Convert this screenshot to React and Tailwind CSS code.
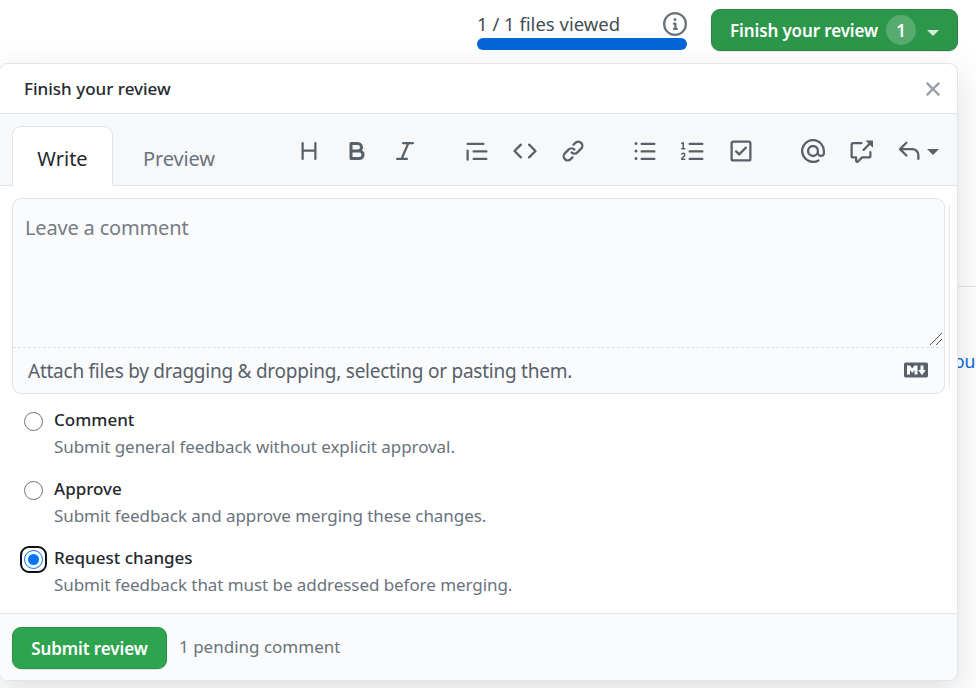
import React from "react";

const PATHS = {
  heading: "M3.75 2a.75.75 0 0 1 .75.75V7h7V2.75a.75.75 0 0 1 1.5 0v10.5a.75.75 0 0 1-1.5 0V8.5h-7v4.75a.75.75 0 0 1-1.5 0V2.75A.75.75 0 0 1 3.75 2Z",
  bold: "M4 2h4.5a3.501 3.501 0 0 1 2.852 5.53A3.499 3.499 0 0 1 9.5 14H4a1 1 0 0 1-1-1V3a1 1 0 0 1 1-1Zm1 7v3h4.5a1.5 1.5 0 0 0 0-3Zm3.5-2a1.5 1.5 0 0 0 0-3H5v3Z",
  italic: "M6 2.75A.75.75 0 0 1 6.75 2h6.5a.75.75 0 0 1 0 1.5h-2.505l-3.858 9H9.25a.75.75 0 0 1 0 1.5h-6.5a.75.75 0 0 1 0-1.5h2.505l3.858-9H6.75A.75.75 0 0 1 6 2.75Z",
  quote: "M1.75 2.5h10.5a.75.75 0 0 1 0 1.5H1.75a.75.75 0 0 1 0-1.5Zm4 5h8.5a.75.75 0 0 1 0 1.5h-8.5a.75.75 0 0 1 0-1.5Zm0 5h8.5a.75.75 0 0 1 0 1.5h-8.5a.75.75 0 0 1 0-1.5ZM2.5 7.75v6a.75.75 0 0 1-1.5 0v-6a.75.75 0 0 1 1.5 0Z",
  code: "m11.28 3.22 4.25 4.25a.75.75 0 0 1 0 1.06l-4.25 4.25a.749.749 0 0 1-1.275-.326.749.749 0 0 1 .215-.734L13.94 8l-3.72-3.72a.749.749 0 0 1 .326-1.275.749.749 0 0 1 .734.215Zm-6.56 0a.751.751 0 0 1 1.042.018.751.751 0 0 1 .018 1.042L2.06 8l3.72 3.72a.749.749 0 0 1-.326 1.275.749.749 0 0 1-.734-.215L.47 8.53a.75.75 0 0 1 0-1.06Z",
  link: "m7.775 3.275 1.25-1.25a3.5 3.5 0 1 1 4.95 4.95l-2.5 2.5a3.5 3.5 0 0 1-4.95 0 .751.751 0 0 1 .018-1.042.751.751 0 0 1 1.042-.018 1.998 1.998 0 0 0 2.83 0l2.5-2.5a2.002 2.002 0 0 0-2.83-2.83l-1.25 1.25a.751.751 0 0 1-1.042-.018.751.751 0 0 1-.018-1.042Zm-4.69 9.64a1.998 1.998 0 0 0 2.83 0l1.25-1.25a.751.751 0 0 1 1.042.018.751.751 0 0 1 .018 1.042l-1.25 1.25a3.5 3.5 0 1 1-4.95-4.95l2.5-2.5a3.5 3.5 0 0 1 4.95 0 .751.751 0 0 1-.018 1.042.751.751 0 0 1-1.042.018 1.998 1.998 0 0 0-2.83 0l-2.5 2.5a1.998 1.998 0 0 0 0 2.83Z",
  ul: "M5.75 2.5h8.5a.75.75 0 0 1 0 1.5h-8.5a.75.75 0 0 1 0-1.5Zm0 5h8.5a.75.75 0 0 1 0 1.5h-8.5a.75.75 0 0 1 0-1.5Zm0 5h8.5a.75.75 0 0 1 0 1.5h-8.5a.75.75 0 0 1 0-1.5ZM2 14a1 1 0 1 1 0-2 1 1 0 0 1 0 2Zm1-6a1 1 0 1 1-2 0 1 1 0 0 1 2 0ZM2 4a1 1 0 1 1 0-2 1 1 0 0 1 0 2Z",
  ol: "M5 3.25a.75.75 0 0 1 .75-.75h8.5a.75.75 0 0 1 0 1.5h-8.5A.75.75 0 0 1 5 3.25Zm0 5a.75.75 0 0 1 .75-.75h8.5a.75.75 0 0 1 0 1.5h-8.5A.75.75 0 0 1 5 8.25Zm0 5a.75.75 0 0 1 .75-.75h8.5a.75.75 0 0 1 0 1.5h-8.5a.75.75 0 0 1-.75-.75ZM.924 10.32a.5.5 0 0 1-.851-.525l.001-.001.001-.002.002-.004.007-.011c.097-.144.215-.273.348-.384.228-.19.588-.392 1.068-.392.468 0 .858.181 1.126.484.259.294.377.673.377 1.038 0 .987-.686 1.495-1.156 1.845l-.047.035c-.303.225-.522.4-.654.597h1.357a.5.5 0 0 1 0 1H.5a.5.5 0 0 1-.5-.5c0-1.005.692-1.52 1.167-1.875l.035-.025c.531-.396.8-.625.8-1.078a.57.57 0 0 0-.128-.376C1.806 10.068 1.695 10 1.5 10a.658.658 0 0 0-.429.163.835.835 0 0 0-.144.153ZM2.003 2.5V6h.503a.5.5 0 0 1 0 1H.5a.5.5 0 0 1 0-1h.503V3.308l-.28.14a.5.5 0 0 1-.446-.895l1.003-.5a.5.5 0 0 1 .723.447Z",
  task: "M2.75 1h10.5c.966 0 1.75.784 1.75 1.75v10.5A1.75 1.75 0 0 1 13.25 15H2.75A1.75 1.75 0 0 1 1 13.25V2.75C1 1.784 1.784 1 2.75 1ZM2.5 2.75v10.5c0 .138.112.25.25.25h10.5a.25.25 0 0 0 .25-.25V2.75a.25.25 0 0 0-.25-.25H2.75a.25.25 0 0 0-.25.25Zm9.28 3.53-4.5 4.5a.75.75 0 0 1-1.06 0l-2-2a.75.75 0 0 1 1.06-1.06L6.75 9.19l3.97-3.97a.75.75 0 0 1 1.06 1.06Z",
  mention: "M4.75 2.37a6.501 6.501 0 0 0 6.5 11.26.75.75 0 0 1 .75 1.298A7.999 7.999 0 0 1 .989 4.148 8 8 0 0 1 16 7.75v1.5a2.75 2.75 0 0 1-5.072 1.475 3.999 3.999 0 0 1-6.65-4.19A4 4 0 0 1 12 8v1.25a1.25 1.25 0 0 0 2.5 0V7.867a6.5 6.5 0 0 0-9.75-5.496ZM10.5 8a2.5 2.5 0 1 0-5 0 2.5 2.5 0 0 0 5 0Z",
  xref: "M2.75 3.5a.25.25 0 0 0-.25.25v7.5c0 .138.112.25.25.25h2a.75.75 0 0 1 .75.75v2.19l2.72-2.72a.749.749 0 0 1 .53-.22h4.5a.25.25 0 0 0 .25-.25v-2.5a.75.75 0 0 1 1.5 0v2.5A1.75 1.75 0 0 1 13.25 13H9.06l-2.573 2.573A1.458 1.458 0 0 1 4 14.543V13H2.75A1.75 1.75 0 0 1 1 11.25v-7.5C1 2.784 1.784 2 2.75 2h5.5a.75.75 0 0 1 0 1.5ZM16 1.25v4.146a.25.25 0 0 1-.427.177L14.03 4.03l-3.75 3.75a.749.749 0 0 1-1.275-.326.749.749 0 0 1 .215-.734l3.75-3.75-1.543-1.543A.25.25 0 0 1 11.604 1h4.146a.25.25 0 0 1 .25.25Z",
  reply: "M6.78 1.97a.75.75 0 0 1 0 1.06L3.81 6h6.44A4.75 4.75 0 0 1 15 10.75v2.5a.75.75 0 0 1-1.5 0v-2.5a3.25 3.25 0 0 0-3.25-3.25H3.81l2.97 2.97a.749.749 0 0 1-.326 1.275.749.749 0 0 1-.734-.215L1.47 7.28a.75.75 0 0 1 0-1.06l4.25-4.25a.75.75 0 0 1 1.06 0Z",
  info: "M0 8a8 8 0 1 1 16 0A8 8 0 0 1 0 8Zm8-6.5a6.5 6.5 0 1 0 0 13 6.5 6.5 0 0 0 0-13ZM6.5 7.75A.75.75 0 0 1 7.25 7h1a.75.75 0 0 1 .75.75v2.75h.25a.75.75 0 0 1 0 1.5h-2a.75.75 0 0 1 0-1.5h.25v-2h-.25a.75.75 0 0 1-.75-.75ZM8 6a1 1 0 1 1 0-2 1 1 0 0 1 0 2Z",
  markdown: "M14.85 3c.63 0 1.15.52 1.14 1.15v7.7c0 .63-.51 1.15-1.15 1.15H1.15C.52 13 0 12.48 0 11.84V4.15C0 3.52.52 3 1.15 3ZM9 11V5H7L5.5 7 4 5H2v6h2V8l1.5 1.92L7 8v3Zm2.99.5L14.5 8H13V5h-2v3H9.5Z",
  x: "M3.72 3.72a.75.75 0 0 1 1.06 0L8 6.94l3.22-3.22a.749.749 0 0 1 1.275.326.749.749 0 0 1-.215.734L9.06 8l3.22 3.22a.749.749 0 0 1-.326 1.275.749.749 0 0 1-.734-.215L8 9.06l-3.22 3.22a.751.751 0 0 1-1.042-.018.751.751 0 0 1-.018-1.042L6.94 8 3.72 4.78a.75.75 0 0 1 0-1.06Z",
};

function Icon({ name, className = "" }) {
  return (
    <svg viewBox="0 0 16 16" fill="currentColor" className={`size-6 shrink-0 ${className}`} aria-hidden="true">
      <path fillRule="evenodd" d={PATHS[name]} />
    </svg>
  );
}

function Caret({ className = "" }) {
  return (
    <svg viewBox="0 0 12 6" fill="currentColor" className={`h-1.5 w-3 shrink-0 ${className}`} aria-hidden="true">
      <path d="M0 0h12L6 6Z" />
    </svg>
  );
}

const TOOL_GROUPS = [
  ["heading", "bold", "italic"],
  ["quote", "code", "link"],
  ["ul", "ol", "task"],
];

const OPTIONS = [
  { title: "Comment", text: "Submit general feedback without explicit approval." },
  { title: "Approve", text: "Submit feedback and approve merging these changes." },
  { title: "Request changes", text: "Submit feedback that must be addressed before merging.", checked: true },
];

function Radio({ checked }) {
  if (checked) {
    return (
      <span className="-m-1 flex size-[27px] items-center justify-center rounded-[9px] border-2 border-[#101010]">
        <span className="flex size-[19px] items-center justify-center rounded-full border border-[#0075ff]">
          <span className="size-[11px] rounded-full bg-[#0075ff]" />
        </span>
      </span>
    );
  }
  return <span className="size-[19px] rounded-full border border-[#767676] bg-white" />;
}

export default function App() {
  return (
    <div className="relative h-[688px] w-[976px] overflow-hidden bg-white font-['Noto_Sans',sans-serif] text-[#24292e]">
      <div className="absolute top-[286px] left-[950px] h-px w-[26px] bg-[#e1e4e8]" />
      <span className="absolute top-[349px] left-[945px] text-[17.5px] leading-6 whitespace-nowrap text-[#0366d6]">you</span>

      <div className="flex h-[63px] justify-end pr-[18px]">
        <div className="mr-6 w-[210px] pt-3">
          <div className="flex h-6 items-center justify-between text-[#6a737d]">
            <span className="text-[18.5px] leading-6 whitespace-nowrap text-[#444d56]">1 / 1 files viewed</span>
            <Icon name="info" />
          </div>
          <div className="mt-0.5 h-3 rounded-full bg-[#0366d6]" />
        </div>
        <button className="mt-[9px] flex h-[42px] w-[247px] items-center rounded-[9px] border border-[#2a8444] bg-[#2c974b] pl-[18px] text-white shadow-[0_1px_1px_rgba(27,31,35,0.1)]">
          <span className="w-[148px] pt-0.5 text-left text-[17px] leading-6 font-semibold tracking-[-0.12px] whitespace-nowrap">Finish your review</span>
          <span className="ml-2 flex size-[30px] items-center justify-center rounded-full bg-white/20 text-[17px] leading-none font-semibold">1</span>
          <Caret className="mt-1.5 ml-[11px] opacity-80" />
        </button>
      </div>

      <div className="relative -ml-px flex h-[618px] w-[959px] flex-col overflow-hidden rounded-[9px] border border-[#e1e4e8] bg-white shadow-[0_12px_36px_rgba(100,105,110,0.22)]">
        <div className="flex h-[49px] shrink-0 items-center justify-between pr-3 pl-6">
          <span className="text-[17px] leading-6 font-medium whitespace-nowrap">Finish your review</span>
          <Icon name="x" className="text-[#959da5]" />
        </div>

        <div className="flex h-[73px] shrink-0 border-y border-[#e1e4e8] bg-[#f6f8fa] pt-3 pl-3">
          <div className="-mb-px flex w-[101px] items-center justify-center rounded-t-[9px] border border-b-0 border-[#e1e4e8] bg-white pt-1">
            <span className="text-[20px] leading-7 whitespace-nowrap">Write</span>
          </div>
          <div className="flex w-[184px] items-center pt-1.5 pl-[30px]">
            <span className="text-[20px] leading-7 tracking-[-0.15px] whitespace-nowrap text-[#6a737d]">Preview</span>
          </div>
          <div className="flex h-[50px] items-center gap-12 text-[#586069]">
            {TOOL_GROUPS.map((group) => (
              <div key={group[0]} className="flex gap-6">
                {group.map((name) => (
                  <Icon key={name} name={name} />
                ))}
              </div>
            ))}
            <div className="flex items-center gap-6">
              <Icon name="mention" />
              <Icon name="xref" />
              <div className="flex items-center gap-1.5">
                <Icon name="reply" />
                <Caret className="mt-0.5" />
              </div>
            </div>
          </div>
        </div>

        <div className="flex h-[208px] shrink-0 pt-3 pl-3">
          <div className="flex h-[196px] w-[933px] flex-col rounded-[9px] border border-[#e1e4e8] bg-[#fafbfc]">
            <div className="flex h-[149px] justify-between border-b border-dashed border-[#dfe2e5] pt-[15px] pl-3">
              <span className="text-[20px] leading-7 tracking-[-0.17px] whitespace-nowrap text-[#757c85]">Leave a comment</span>
              <svg viewBox="0 0 14 14" className="mr-px mb-px size-[14px] self-end" fill="none" stroke="#555" strokeWidth="1">
                <path d="M1 13 13 1M7 13l6-6" />
              </svg>
            </div>
            <div className="flex flex-1 items-center justify-between pr-4 pl-[15px] text-[#586069]">
              <span className="text-[19px] leading-7 tracking-[-0.25px] whitespace-nowrap">Attach files by dragging &amp; dropping, selecting or pasting them.</span>
              <Icon name="markdown" className="-mt-0.5" />
            </div>
          </div>
          <div className="mt-[7px] ml-1 h-[183px] w-px bg-[#e1e4e8]" />
        </div>

        <div className="flex h-[219px] shrink-0 flex-col pt-3.5">
          {OPTIONS.map((o) => (
            <div key={o.title} className="flex h-[69px] shrink-0 pl-6">
              <div className="flex w-[30px] pt-1">
                <Radio checked={o.checked} />
              </div>
              <div>
                <div className="text-[17px] leading-6 font-medium whitespace-nowrap">{o.title}</div>
                <div className="text-[17px] leading-[30px] tracking-[-0.06px] whitespace-nowrap text-[#6a737d]">{o.text}</div>
              </div>
            </div>
          ))}
        </div>

        <div className="flex flex-1 items-start border-t border-[#e1e4e8] bg-[#fafbfc] pt-[13px] pl-3">
          <button className="flex h-[42px] w-[155px] items-center justify-center rounded-[9px] border border-[#2a9147] bg-[#2ea44f] text-white shadow-[0_1px_1px_rgba(27,31,35,0.1)]">
            <span className="pt-0.5 text-[17px] leading-6 font-semibold tracking-[-0.08px] whitespace-nowrap">Submit review</span>
          </button>
          <span className="mt-2 ml-3 text-[17px] leading-6 whitespace-nowrap text-[#6a737d]">1 pending comment</span>
        </div>
      </div>
    </div>
  );
}
